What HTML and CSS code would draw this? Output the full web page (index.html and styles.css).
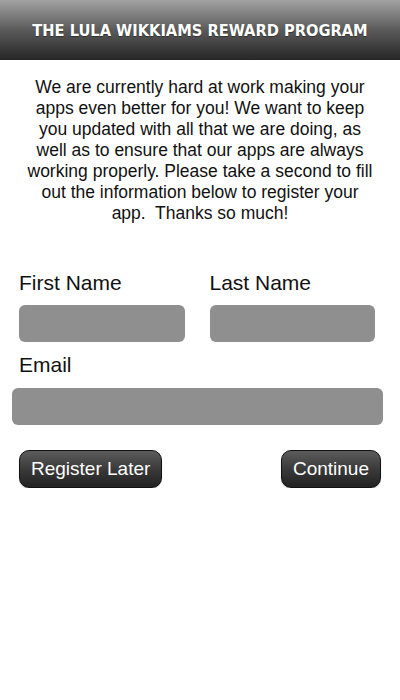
FILE: index.html
```html
<!DOCTYPE html>
<html lang="en">
<head>
    <meta charset="UTF-8">
    <meta name="viewport" content="width=device-width, initial-scale=1.0, user-scalable=no">
    <title>The Lula Wikkiams Reward Program</title>
    <link rel="stylesheet" href="styles.css">
</head>
<body>
    <header class="top-bar">
        <h1>THE LULA WIKKIAMS REWARD PROGRAM</h1>
    </header>

    <p class="intro">
        We are currently hard at work making your<br>
        apps even better for you! We want to keep<br>
        you updated with all that we are doing, as<br>
        well as to ensure that our apps are always<br>
        working properly. Please take a second to fill<br>
        out the information below to register your<br>
        app.&nbsp; Thanks so much!
    </p>

    <form class="register-form" onsubmit="return false">
        <div class="name-row">
            <div class="field">
                <label for="firstName">First Name</label>
                <input type="text" id="firstName">
            </div>
            <div class="field">
                <label for="lastName">Last Name</label>
                <input type="text" id="lastName">
            </div>
        </div>
        <label for="email" class="email-label">Email</label>
        <input type="email" id="email" class="email-input">

        <div class="actions">
            <button type="button" class="btn">Register Later</button>
            <button type="submit" class="btn">Continue</button>
        </div>
    </form>
</body>
</html>
```

FILE: styles.css
```css
body {
    margin: 0;
    font-family: "Liberation Sans", Arial, sans-serif;
    background-color: #fff;
    color: #111;
}
.top-bar {
    height: 60px;
    display: flex;
    align-items: center;
    justify-content: center;
    background: linear-gradient(to bottom, #a2a2a2, #5a5a5a 50%, #262626);
}
.top-bar h1 {
    margin: 0;
    font-family: "DejaVu Sans", sans-serif;
    font-stretch: condensed;
    font-size: 16.3px;
    font-weight: bold;
    color: #fff;
    text-shadow: 0 1px 1px rgba(0, 0, 0, 0.4);
}
.intro {
    margin: 17px 0 0;
    font-size: 17.5px;
    line-height: 21px;
    text-align: center;
}
.register-form {
    padding: 47px 0 0;
}
.name-row {
    display: flex;
    gap: 25px;
    padding: 0 25px 0 19px;
}
.field {
    flex: 1;
    min-width: 0;
    display: flex;
    flex-direction: column;
}
label {
    font-size: 21px;
    line-height: 24px;
}
.field label {
    margin-bottom: 10px;
}
input {
    width: 100%;
    height: 37px;
    box-sizing: border-box;
    border: none;
    border-radius: 6px;
    background-color: #8f8f8f;
    padding: 0 8px;
    font-size: 18px;
}
.email-label {
    display: block;
    margin: 11px 0 11px 19px;
}
.email-input {
    display: block;
    width: 371px;
    margin-left: 12px;
}
.actions {
    display: flex;
    justify-content: space-between;
    padding: 25px 19px 0;
}
.btn {
    height: 38px;
    padding: 0 11px;
    border: 1px solid #111;
    border-radius: 10px;
    background: linear-gradient(to bottom, #5c5c5c, #3a3a3a 50%, #222);
    color: #fff;
    font-family: "Liberation Sans", Arial, sans-serif;
    font-size: 19px;
    box-shadow: 0 1px 1px rgba(0, 0, 0, 0.2);
}
```
